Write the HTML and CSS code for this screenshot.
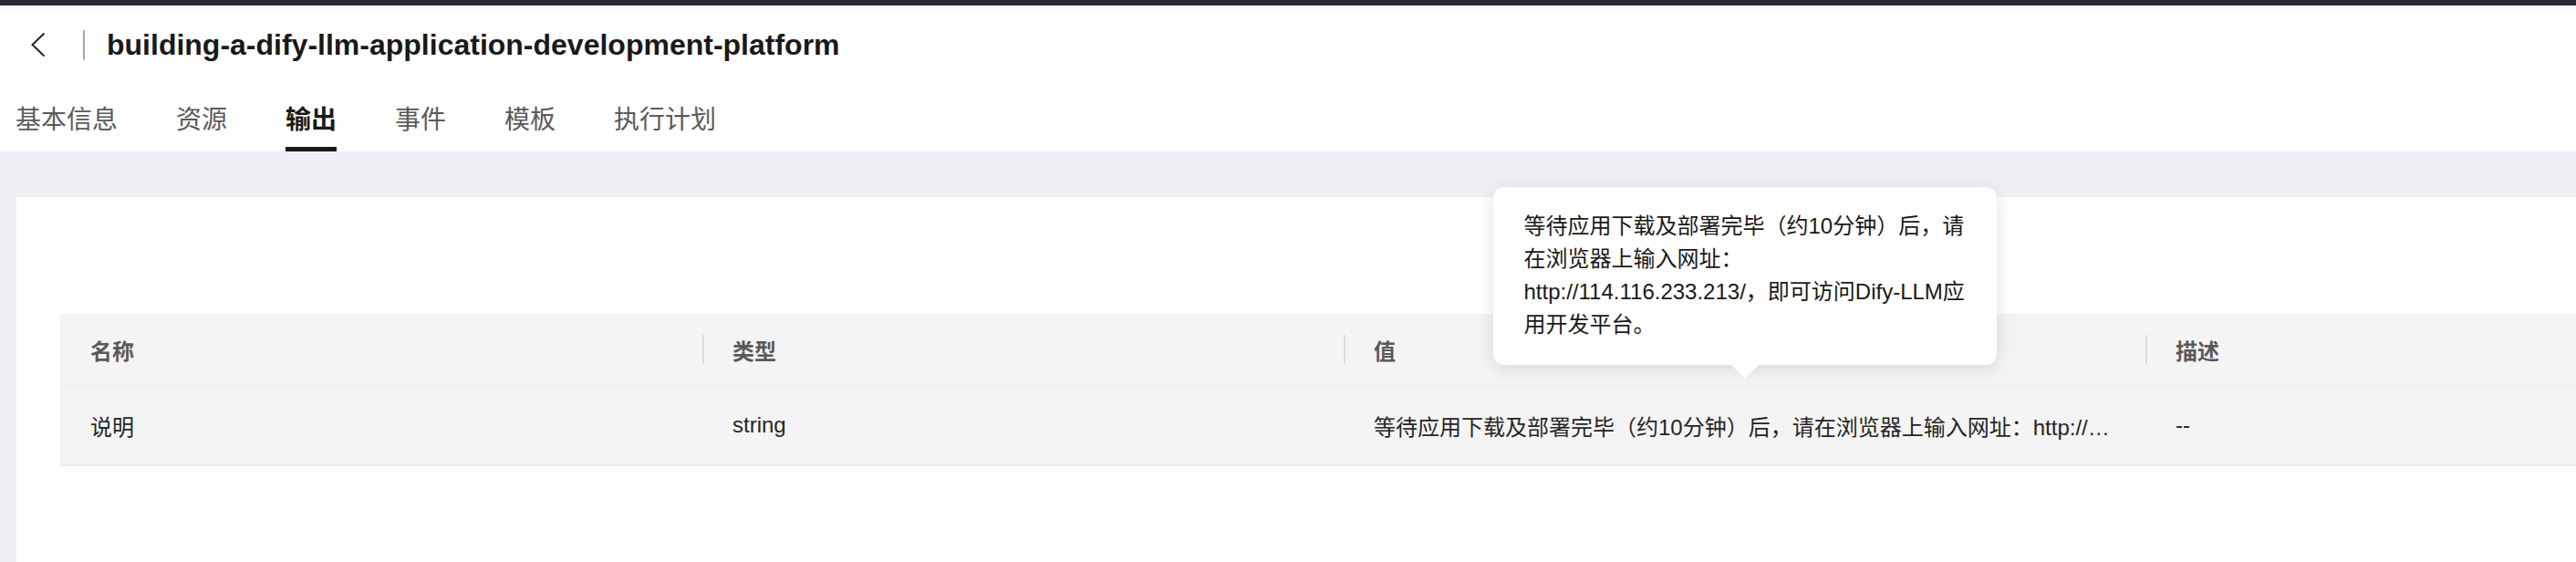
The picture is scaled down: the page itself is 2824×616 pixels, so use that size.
FILE: index.html
```html
<!DOCTYPE html>
<html lang="zh-CN">
<head>
<meta charset="utf-8">
<title>building-a-dify-llm-application-development-platform</title>
<link rel="stylesheet" href="styles.css">
</head>
<body>
<div class="topbar"></div>
<header class="titlebar">
  <button class="back" type="button" aria-label="返回">
    <svg width="16" height="28" viewBox="0 0 16 28"><path d="M14.5 1.5 L1.5 14 L14.5 26.5" fill="none" stroke="#252525" stroke-width="2"/></svg>
  </button>
  <span class="vsep"></span>
  <h1 class="title">building-a-dify-llm-application-development-platform</h1>
</header>
<nav class="tabs">
  <span class="tab">基本信息</span>
  <span class="tab">资源</span>
  <span class="tab active">输出</span>
  <span class="tab">事件</span>
  <span class="tab">模板</span>
  <span class="tab">执行计划</span>
</nav>
<main class="content">
  <section class="card">
    <div class="table">
      <div class="row thead">
        <div class="cell">名称</div>
        <div class="cell sep">类型</div>
        <div class="cell sep">值</div>
        <div class="cell sep">描述</div>
      </div>
      <div class="row tbody">
        <div class="cell">说明</div>
        <div class="cell">string</div>
        <div class="cell value">
          <div class="ellipsis">等待应用下载及部署完毕（约10分钟）后，请在浏览器上输入网址：http://114.116.233.213/，即可访问Dify-LLM应用开发平台。</div>
          <div class="tooltip">等待应用下载及部署完毕（约10分钟）后，请在浏览器上输入网址：http://114.116.233.213/，即可访问Dify-LLM应用开发平台。</div>
        </div>
        <div class="cell">--</div>
      </div>
    </div>
  </section>
</main>
</body>
</html>
```

FILE: styles.css
```css
* { box-sizing: border-box; }
html, body {
  margin: 0;
  padding: 0;
  height: 100%;
}
body {
  font-family: "Liberation Sans", "Noto Sans CJK SC", sans-serif;
  color: #191919;
  background: #ffffff;
  overflow: hidden;
  display: flex;
  flex-direction: column;
}
.topbar {
  height: 6px;
  background: #262a35;
  box-shadow: 0 2px 6px rgba(0, 0, 0, 0.08);
  flex: none;
}
.titlebar {
  height: 86px;
  display: flex;
  align-items: center;
  padding-left: 34px;
  flex: none;
}
.back {
  border: 0;
  background: none;
  padding: 0;
  width: 16px;
  height: 28px;
  display: flex;
}
.vsep {
  width: 2px;
  height: 33px;
  background: #a8a8a8;
  margin-left: 41px;
}
.title {
  margin: 0 0 0 24px;
  font-size: 32px;
  font-weight: bold;
  color: #191919;
  line-height: 40px;
}
.tabs {
  height: 74px;
  display: flex;
  gap: 64px;
  padding-left: 17px;
  flex: none;
}
.tab {
  position: relative;
  display: flex;
  align-items: center;
  font-size: 28px;
  color: #5a5a5a;
  padding-bottom: 0;
}
.tab.active {
  color: #191919;
  font-weight: bold;
}
.tab.active::after {
  content: "";
  position: absolute;
  left: 0;
  right: 0;
  bottom: 0;
  height: 5px;
  background: #191919;
}
.content {
  flex: 1;
  background: #eef0f5;
  padding: 50px 0 0 18px;
  display: flex;
}
.card {
  flex: 1;
  background: #ffffff;
  padding: 128px 0 0 48px;
}
.table {
  width: 100%;
}
.row {
  display: grid;
  grid-template-columns: 704px 703px 879px 1fr;
  background: #f4f4f4;
}
.thead {
  height: 79px;
  border-bottom: 1px solid #ebebeb;
}
.tbody {
  height: 88px;
  border-bottom: 2px solid #ebebeb;
}
.cell {
  position: relative;
  display: flex;
  align-items: center;
  padding: 0 33px;
  font-size: 24px;
  min-width: 0;
}
.thead .cell {
  color: #595959;
  font-weight: bold;
}
.tbody .cell {
  color: #252525;
}
.cell.sep::before {
  content: "";
  position: absolute;
  left: 0;
  top: 50%;
  height: 32px;
  margin-top: -16px;
  width: 2px;
  background: #dcdcdc;
}
.ellipsis {
  white-space: nowrap;
  overflow: hidden;
  text-overflow: ellipsis;
  min-width: 0;
}
.tooltip {
  position: absolute;
  left: 50%;
  bottom: calc(100% + 23px);
  transform: translateX(-50%);
  width: 552px;
  padding: 25px 28px 26px 34px;
  background: #ffffff;
  border-radius: 12px;
  box-shadow: 0 4px 20px rgba(0, 0, 0, 0.12);
  font-size: 24px;
  line-height: 36px;
  color: #191919;
  word-break: normal;
}
.tooltip::after {
  content: "";
  position: absolute;
  left: 50%;
  top: 100%;
  margin-left: -15px;
  border-left: 15px solid transparent;
  border-right: 15px solid transparent;
  border-top: 15px solid #ffffff;
}
```
